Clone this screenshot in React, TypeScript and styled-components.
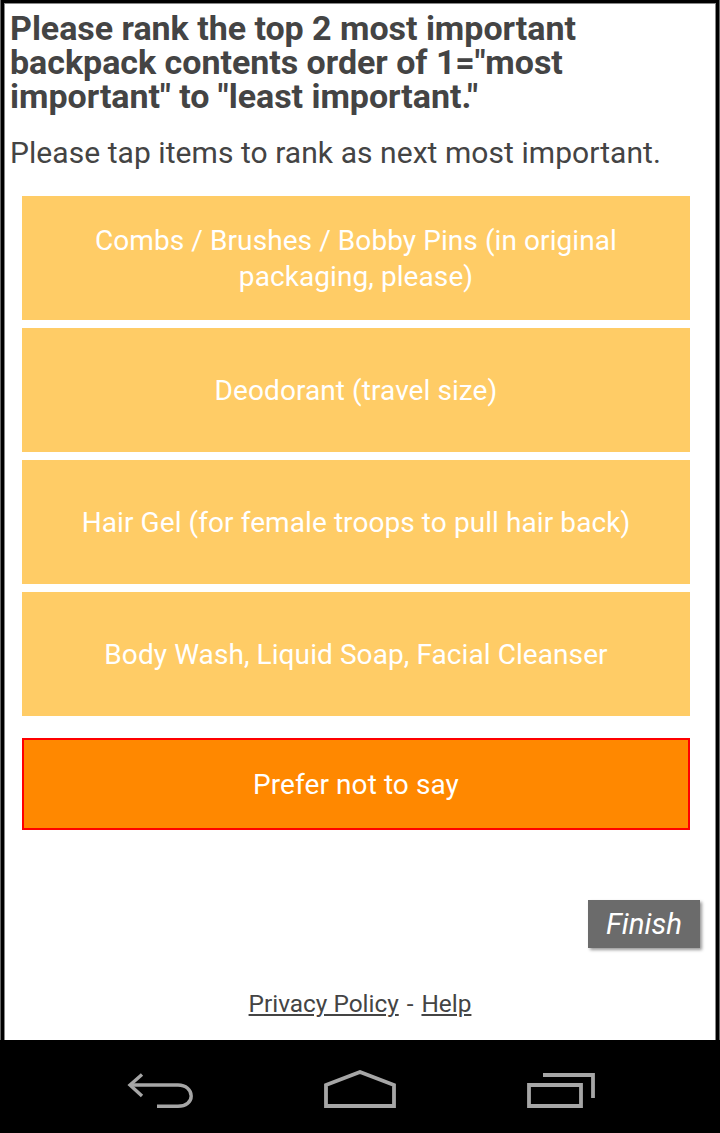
import React from "react";
import styled, { createGlobalStyle } from "styled-components";

const items = [
  "Combs / Brushes / Bobby Pins (in original packaging, please)",
  "Deodorant (travel size)",
  "Hair Gel (for female troops to pull hair back)",
  "Body Wash, Liquid Soap, Facial Cleanser",
];

function App() {
  return (
    <Screen>
      <GlobalStyle />
      <Page>
        <Title>
          Please rank the top 2 most important backpack contents order of 1="most important" to "least important."
        </Title>
        <Hint>Please tap items to rank as next most important.</Hint>
        <Options>
          {items.map((item) => (
            <Option key={item}>{item}</Option>
          ))}
        </Options>
        <Decline>Prefer not to say</Decline>
        <Actions>
          <Finish>Finish</Finish>
        </Actions>
        <Footer>
          <a href="#">Privacy Policy</a>
          <Separator>-</Separator>
          <a href="#">Help</a>
        </Footer>
      </Page>
      <NavBar>
        <svg width="66" height="38" viewBox="0 0 66 38" fill="none" stroke="#a6a6a6" strokeWidth="3.4">
          <path d="M15 4.5 L3 15 L15 26" />
          <path d="M3 15 H51 C59 15 64.2 20 64.2 26 C64.2 32 59 36.3 51 36.3 H30" />
        </svg>
        <svg width="72" height="38" viewBox="0 0 72 38" fill="none" stroke="#a6a6a6" strokeWidth="3.8">
          <path d="M2 15 L36 2 L70 15 V36 H2 Z" />
        </svg>
        <svg width="68" height="38" viewBox="0 0 68 38" fill="none" stroke="#a6a6a6" strokeWidth="3.8">
          <path d="M2 15 H54 V36 H2 Z" />
          <path d="M16 5 H66 V28" />
        </svg>
      </NavBar>
    </Screen>
  );
}

const GlobalStyle = createGlobalStyle`
  html, body {
    margin: 0;
    padding: 0;
    background: #000;
  }
  * {
    box-sizing: border-box;
  }
`;

const Screen = styled.div`
  width: 720px;
  height: 1133px;
  display: flex;
  flex-direction: column;
  background: #000;
  font-family: Roboto, "Liberation Sans", sans-serif;
  overflow: hidden;
`;

const Page = styled.div`
  height: 1040px;
  padding: 11px 30px 0 10px;
  background: #fff;
  color: #444;
  box-shadow:
    inset 1px 0 #666,
    inset -1px 0 #666,
    inset 4px 0 #000,
    inset -4px 0 #000,
    inset 0 3px #000,
    inset 5px 0 #888,
    inset -5px 0 #888,
    inset 0 4px #888;
`;

const Title = styled.h1`
  margin: 0;
  font-size: 34px;
  line-height: 34px;
  letter-spacing: -0.03px;
  font-weight: 700;
  color: #444;
`;

const Hint = styled.p`
  margin: 22px 0 0;
  font-size: 30px;
  line-height: 36px;
  letter-spacing: 0.06px;
  font-weight: 400;
`;

const Options = styled.div`
  display: flex;
  flex-direction: column;
  gap: 8px;
  margin: 25px 0 0 12px;
`;

const Option = styled.div`
  height: 124px;
  padding: 2px 50px 0;
  display: flex;
  align-items: center;
  justify-content: center;
  text-align: center;
  background: #ffcc66;
  color: #fff;
  font-size: 28px;
  letter-spacing: 0.08px;
  line-height: 36px;
`;

const Decline = styled(Option)`
  height: 92px;
  margin: 22px 0 0 12px;
  background: #ff8800;
  border: 2px solid #f00;
`;

const Actions = styled.div`
  display: flex;
  justify-content: flex-end;
  margin: 70px -10px 0 0;
`;

const Finish = styled.div`
  width: 112px;
  height: 48px;
  display: flex;
  align-items: center;
  justify-content: center;
  background: #6b6b6b;
  color: #fff;
  font-size: 29.5px;
  font-style: italic;
  box-shadow: 2px 2px 3px #999;
`;

const Footer = styled.div`
  margin: 41px -20px 0 0;
  display: flex;
  justify-content: center;
  font-size: 24.4px;
  line-height: 30px;
  color: #444;

  a {
    color: #444;
  }
`;

const Separator = styled.span`
  margin: 0 8px;
`;

const NavBar = styled.div`
  flex: 1;
  background: #000;
  display: flex;
  align-items: flex-start;
  gap: 131px;
  padding: 30px 0 0 127px;
`;

export default App;
